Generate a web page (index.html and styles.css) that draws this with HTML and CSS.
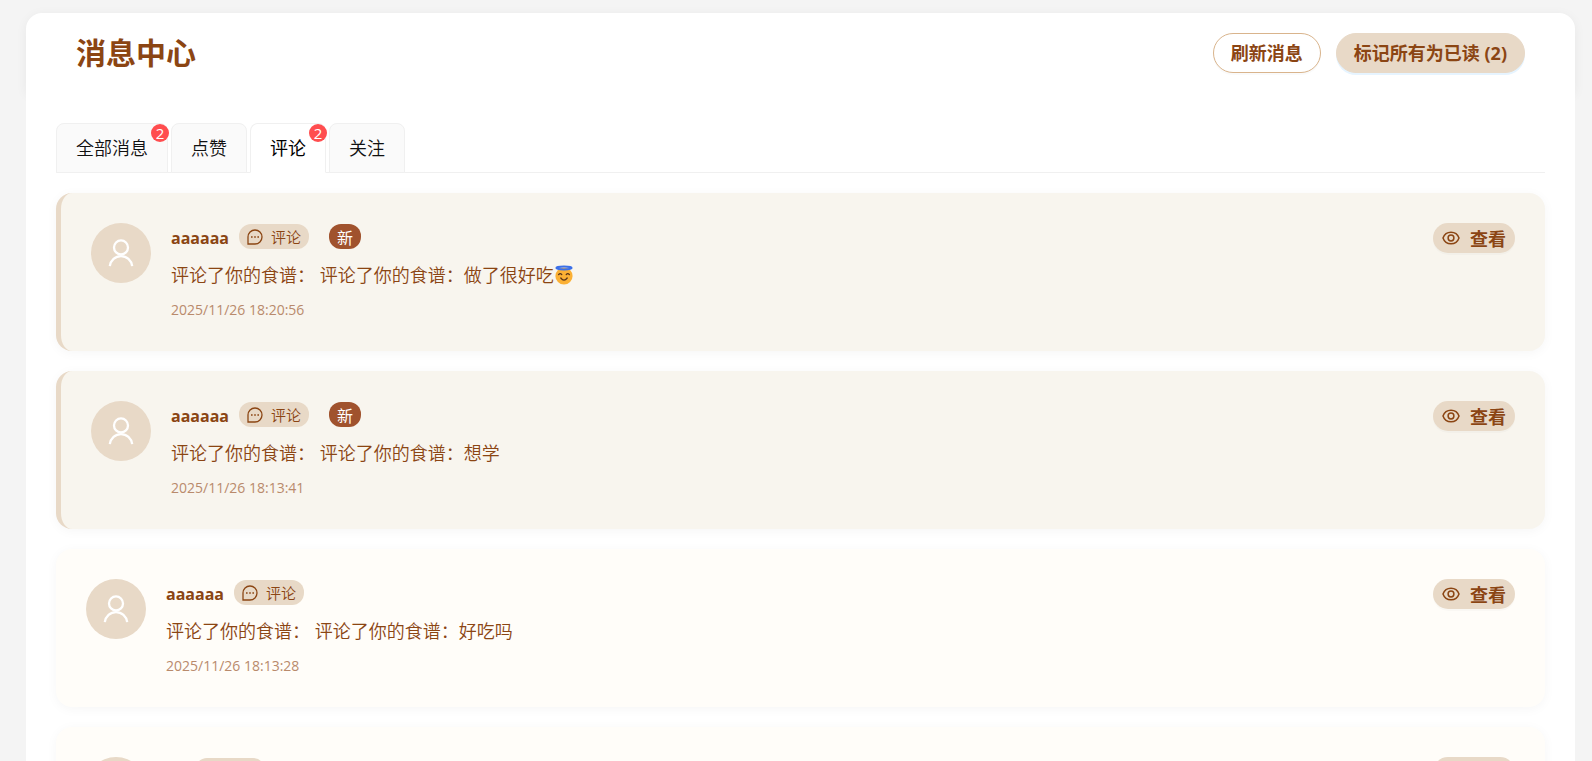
FILE: index.html
```html
<!DOCTYPE html>
<html lang="zh-CN">
<head>
  <meta charset="UTF-8" />
  <meta name="viewport" content="width=device-width, initial-scale=1" />
  <title>消息中心</title>
  <link rel="stylesheet" href="styles.css">
</head>
<body>
  <svg class="sprite" aria-hidden="true">
    <symbol id="icon-user" viewBox="0 0 28 28">
      <circle cx="14" cy="8.4" r="7" />
      <path d="M2.8 27.2a11.3 11.7 0 0 1 22.4 0" />
    </symbol>
    <symbol id="icon-comment" viewBox="0 0 16 16">
      <path d="M1 15V8a7 7 0 1 1 7 7z" />
      <path class="dots" d="M4 7.200h1.600v1.600H4zM7.200 7.200h1.600v1.600H7.200zM10.400 7.200h1.600v1.600h-1.600z" />
    </symbol>
    <symbol id="icon-eye" viewBox="0 0 18 18">
      <path d="M1 9C2.400 5 5.400 3.200 9 3.200s6.600 1.800 8 5.800c-1.400 4-4.400 5.800-8 5.800S2.400 13 1 9z" />
      <circle cx="9" cy="9" r="2.900" />
    </symbol>
  </svg>

  <div class="message-center">
    <header class="page-header">
      <h1>消息中心</h1>
      <div class="header-actions">
        <button type="button" class="btn btn-outline">刷新消息</button>
        <button type="button" class="btn btn-primary">标记所有为已读 (2)</button>
      </div>
    </header>

    <main class="content">
      <div class="tabs" role="tablist">
        <button type="button" class="tab" role="tab">全部消息<span class="count">2</span></button>
        <button type="button" class="tab" role="tab">点赞</button>
        <button type="button" class="tab active" role="tab" aria-selected="true">评论<span class="count">2</span></button>
        <button type="button" class="tab" role="tab">关注</button>
      </div>

      <div class="message-list">
        <article class="message unread">
          <div class="avatar"><svg><use href="#icon-user" /></svg></div>
          <div class="message-body">
            <div class="message-head">
              <span class="username">aaaaaa</span>
              <span class="tag"><svg><use href="#icon-comment" /></svg>评论</span>
              <span class="tag-new">新</span>
            </div>
            <p class="text">评论了你的食谱： 评论了你的食谱：做了很好吃<svg class="emoji" viewBox="0 0 20 20" role="img" aria-label="😇">
              <circle cx="10" cy="11" r="8.600" fill="#fbb034" />
              <ellipse cx="10" cy="3" rx="7.600" ry="1.400" fill="none" stroke="#3b6fe8" stroke-width="2" />
              <path d="M4.600 9.600q1.600-2 3.200 0M12.200 9.600q1.600-2 3.200 0M6.800 13q3.200 4.200 6.400 0" fill="none" stroke="#5a3418" stroke-width="1.300" stroke-linecap="round" />
            </svg></p>
            <time class="time">2025/11/26 18:20:56</time>
          </div>
          <button type="button" class="btn-view"><svg><use href="#icon-eye" /></svg>查看</button>
        </article>

        <article class="message unread">
          <div class="avatar"><svg><use href="#icon-user" /></svg></div>
          <div class="message-body">
            <div class="message-head">
              <span class="username">aaaaaa</span>
              <span class="tag"><svg><use href="#icon-comment" /></svg>评论</span>
              <span class="tag-new">新</span>
            </div>
            <p class="text">评论了你的食谱： 评论了你的食谱：想学</p>
            <time class="time">2025/11/26 18:13:41</time>
          </div>
          <button type="button" class="btn-view"><svg><use href="#icon-eye" /></svg>查看</button>
        </article>

        <article class="message">
          <div class="avatar"><svg><use href="#icon-user" /></svg></div>
          <div class="message-body">
            <div class="message-head">
              <span class="username">aaaaaa</span>
              <span class="tag"><svg><use href="#icon-comment" /></svg>评论</span>
            </div>
            <p class="text">评论了你的食谱： 评论了你的食谱：好吃吗</p>
            <time class="time">2025/11/26 18:13:28</time>
          </div>
          <button type="button" class="btn-view"><svg><use href="#icon-eye" /></svg>查看</button>
        </article>

        <article class="message">
          <div class="avatar"><svg><use href="#icon-user" /></svg></div>
          <div class="message-body">
            <div class="message-head">
              <span class="username">aa</span>
              <span class="tag"><svg><use href="#icon-comment" /></svg>评论</span>
            </div>
          </div>
          <button type="button" class="btn-view"><svg><use href="#icon-eye" /></svg>查看</button>
        </article>
      </div>
    </main>
  </div>
</body>
</html>
```
FILE: styles.css
```css
* {
  box-sizing: border-box;
}
body {
  margin: 0;
  padding: 13px 17px 0 26px;
  background: #f4f4f4;
  color: #8b4513;
  font-family: "Open Sans", "Noto Sans CJK SC", sans-serif;
  font-size: 18px;
  font-weight: 350;
}
button {
  font-family: inherit;
  font-size: 18px;
  font-weight: 350;
  cursor: pointer;
}
svg {
  fill: none;
  stroke: currentColor;
}
.sprite {
  display: none;
}
.page-header {
  display: flex;
  justify-content: space-between;
  align-items: center;
  padding: 20px 50px;
  background: #fff;
  border-radius: 16px 16px 0 0;
  box-shadow: 0 2px 12px rgba(0, 0, 0, 0.05);
}
.page-header h1 {
  margin: 0;
  font-size: 30px;
  line-height: 40px;
}
.header-actions {
  display: flex;
  gap: 15px;
}
.btn {
  height: 40px;
  padding: 0 17px;
  border: 1px solid #e8d9c7;
  border-radius: 20px;
  color: #8b4513;
  font-weight: bold;
  line-height: 24px;
}
.btn-outline {
  background: #fff;
  border-color: #d9b48c;
  box-shadow: 0 2px 0 rgba(0, 0, 0, 0.02);
}
.btn-primary {
  background: #e8d9c7;
  box-shadow: 0 2px 0 #e6f4ff;
}
.content {
  position: relative;
  padding: 30px;
  background: #fff;
}
.tabs {
  display: flex;
  gap: 3px;
  border-bottom: 1px solid #f0f0f0;
}
.tab {
  position: relative;
  height: 50px;
  margin-bottom: -1px;
  padding: 0 19px;
  border: 1px solid #f0f0f0;
  border-radius: 8px 8px 0 0;
  background: #fafafa;
  color: #111;
  line-height: 24px;
}
.tab.active {
  background: #fff;
  border-bottom-color: #fff;
  color: #000;
  font-weight: 400;
}
.count {
  position: absolute;
  top: 0;
  right: -2px;
  width: 18px;
  height: 18px;
  border-radius: 50%;
  background: #ff4d4f;
  color: #fff;
  font-size: 15px;
  font-weight: 400;
  line-height: 18px;
  text-align: center;
}
.message-list {
  display: flex;
  flex-direction: column;
  gap: 20px;
  margin-top: 20px;
}
.message {
  display: flex;
  align-items: flex-start;
  gap: 20px;
  min-height: 158px;
  padding: 30px;
  border-radius: 16px;
  background: #fffdf9;
  box-shadow: 0 2px 12px rgba(0, 0, 0, 0.04);
}
.message.unread {
  border-left: 5px solid #e8d9c7;
  background: #f8f5ee;
}
.avatar {
  flex: none;
  display: flex;
  justify-content: center;
  align-items: center;
  width: 60px;
  height: 60px;
  border-radius: 50%;
  background: #e8d9c7;
  color: #fff;
}
.avatar svg {
  width: 28px;
  height: 28px;
  stroke-width: 2.3;
}
.message-body {
  flex: 1;
}
.message-head {
  display: flex;
  align-items: flex-start;
  gap: 10px;
  height: 28px;
  padding-top: 1px;
}
.username {
  font-size: 16px;
  font-weight: bold;
  line-height: 28px;
}
.tag,
.tag-new {
  display: flex;
  align-items: center;
  height: 25px;
  padding: 0 8px;
  border-radius: 12px;
  background: #e8d9c7;
  font-size: 15px;
}
.tag svg {
  width: 16px;
  height: 16px;
  margin-right: 8px;
  stroke-width: 1.3;
}
.dots {
  fill: currentColor;
  stroke: none;
}
.tag-new {
  margin-left: 10px;
  background: #a0522d;
  color: #fff;
  font-size: 16px;
  font-weight: 400;
}
.text {
  margin: 8px 0;
  line-height: 32px;
}
.emoji {
  width: 20px;
  height: 20px;
  vertical-align: -3px;
  stroke: none;
}
.time {
  display: block;
  color: #b98a6c;
  font-size: 14px;
  font-weight: 400;
  line-height: 22px;
}
.btn-view {
  display: flex;
  align-items: center;
  gap: 10px;
  height: 30px;
  padding: 0 9px;
  border: 0;
  border-radius: 15px;
  background: #e8d9c7;
  box-shadow: 0 2px 0 rgba(0, 0, 0, 0.02);
  color: #8b4513;
  font-weight: bold;
}
.btn-view svg {
  width: 18px;
  height: 18px;
  stroke-width: 1.5;
}
```
